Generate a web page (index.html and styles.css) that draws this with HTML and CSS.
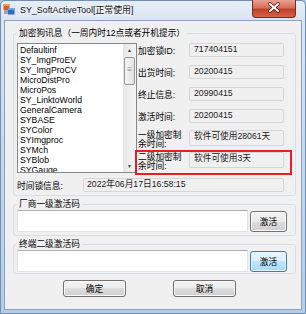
FILE: index.html
```html
<!DOCTYPE html>
<html lang="zh-CN">
<head>
    <meta charset="UTF-8">
    <title>SY_SoftActiveTool</title>
    <link rel="stylesheet" href="styles.css">
</head>
<body>
<div class="window">
    <div class="titlebar">
        <svg class="app-icon" width="12" height="12" viewBox="0 0 12 12">
            <rect x="0.5" y="1" width="6" height="6" fill="#e2572b"/>
            <rect x="0.5" y="1" width="6" height="2" fill="#f59a52"/>
            <rect x="5" y="5" width="6.5" height="6.5" fill="#2f6cc4"/>
            <rect x="5" y="5" width="6.5" height="2" fill="#6fa4e8"/>
            <rect x="1" y="7" width="4" height="4" fill="#9aa5b2"/>
        </svg>
        <span class="title">SY_SoftActiveTool[正常使用]</span>
        <span class="close-btn">
            <svg width="44" height="18" viewBox="0 0 44 18">
                <path d="M18 5 L26 12 M26 5 L18 12" stroke="#5b1712" stroke-width="3.6" stroke-linecap="round"/>
                <path d="M18 5 L26 12 M26 5 L18 12" stroke="#fff" stroke-width="2" stroke-linecap="round"/>
            </svg>
        </span>
    </div>
    <div class="client">
        <fieldset class="group info">
            <legend>加密狗讯息（一周内时12点或者开机提示）</legend>
            <div class="info-top">
                <div class="listbox">
                    <ul class="items">
                        <li>Defaultinf</li>
                        <li>SY_ImgProEV</li>
                        <li>SY_ImgProCV</li>
                        <li>MicroDistPro</li>
                        <li>MicroPos</li>
                        <li>SY_LinktoWorld</li>
                        <li>GeneralCamera</li>
                        <li>SYBASE</li>
                        <li>SYColor</li>
                        <li>SYImgproc</li>
                        <li>SYMch</li>
                        <li>SYBlob</li>
                        <li>SYGauge</li>
                    </ul>
                    <div class="scrollbar">
                        <span class="sb-arrow">&#9650;</span>
                        <span class="sb-thumb">&#8801;</span>
                        <span class="sb-track"></span>
                        <span class="sb-arrow">&#9660;</span>
                    </div>
                </div>
                <div class="fields">
                    <div class="field"><span class="field-label">加密锁ID:</span><span class="field-box">717404151</span></div>
                    <div class="field"><span class="field-label">出货时间:</span><span class="field-box">20200415</span></div>
                    <div class="field"><span class="field-label">终止信息:</span><span class="field-box">20990415</span></div>
                    <div class="field"><span class="field-label">激活时间:</span><span class="field-box">20200415</span></div>
                    <div class="field two-line"><span class="field-label">一级加密制<br>余时间:</span><span class="field-box tall">软件可使用28061天</span></div>
                    <div class="field two-line marked"><span class="field-label">二级加密制<br>余时间:</span><span class="field-box tall">软件可使用3天</span></div>
                </div>
            </div>
            <div class="timelock">
                <span class="timelock-label">时间锁信息:</span>
                <span class="field-box wide">2022年06月17日16:58:15</span>
            </div>
        </fieldset>

        <fieldset class="group code">
            <legend>厂商一级激活码</legend>
            <div class="code-input"></div>
            <button class="btn activate">激活</button>
        </fieldset>

        <fieldset class="group code last">
            <legend>终端二级激活码</legend>
            <div class="code-input"></div>
            <button class="btn activate focused">激活</button>
        </fieldset>

        <div class="actions">
            <button class="btn action">确定</button>
            <button class="btn action">取消</button>
        </div>
    </div>
</div>
</body>
</html>
```

FILE: styles.css
```css
* { box-sizing: border-box; }
html, body { margin: 0; padding: 0; }
body {
    width: 306px;
    height: 314px;
    overflow: hidden;
    font-family: "Liberation Sans", "Noto Sans CJK SC", sans-serif;
    font-size: 8.7px;
    color: #000;
    background: #a9c3df;
}

.window {
    width: 306px;
    height: 314px;
    display: flex;
    flex-direction: column;
    border: 1px solid #6f8fb3;
    border-radius: 5px 5px 0 0;
    background: linear-gradient(#e6edf5, #dae5f1 19px, #c2d6ec 60%, #b5cde8);
}

/* title bar */
.titlebar {
    height: 19px;
    display: flex;
    align-items: flex-start;
}
.app-icon { margin: 2px 0 0 2px; }
.title {
    margin-left: 5px;
    line-height: 18px;
    font-size: 8.9px;
    color: #111;
    text-shadow: 0 0 4px #fff, 0 0 6px #fff;
}
.close-btn {
    margin-left: auto;
    margin-right: 9px;
    margin-top: -1px;
    width: 44px;
    height: 18px;
    border: 1px solid #7a2a22;
    border-top: 0;
    border-radius: 0 0 4px 4px;
    background: linear-gradient(#e9a08f, #d4705a 45%, #c13f28 55%, #d2634a);
    overflow: hidden;
}
.close-btn svg { display: block; margin: -1px 0 0 -1px; }

/* client area */
.client {
    flex: 1;
    margin: 0 3px 3px 3px;
    padding: 7px 5px 0 8px;
    background: #f0f0f0;
    border: 1px solid #8aa2be;
}

.group {
    margin: 0;
    min-width: 0;
    border: 1px solid #d5dfe5;
    border-radius: 3px;
    padding: 5px 10px 3px 3px;
}
.group legend {
    padding: 0 2px;
    margin-left: 0;
    line-height: 10px;
}

.info-top {
    display: flex;
    align-items: flex-start;
}

/* list box */
.listbox {
    width: 120px;
    height: 130px;
    display: flex;
    background: #fff;
    border: 1px solid #828790;
}
.items {
    flex: 1;
    margin: 0;
    padding: 1px 0 0 2px;
    list-style: none;
    overflow: hidden;
}
.items li {
    line-height: 10px;
    white-space: nowrap;
}
.scrollbar {
    width: 13px;
    display: flex;
    flex-direction: column;
    background: linear-gradient(to right, #e6e6e6, #f5f5f5);
}
.sb-arrow {
    height: 12px;
    font-size: 5px;
    line-height: 12px;
    text-align: center;
    color: #3b3b3b;
}
.sb-thumb {
    height: 28px;
    margin: 1px 1px 0 1px;
    border: 1px solid #979797;
    border-radius: 2px;
    background: linear-gradient(to right, #f4f4f4, #e2e2e2);
    font-size: 8px;
    line-height: 24px;
    text-align: center;
    color: #8a8a8a;
}
.sb-track { flex: 1; }

/* info fields */
.fields { margin-left: 1px; }
.field {
    display: flex;
    align-items: center;
    margin-top: 8px;
}
.field:first-child { margin-top: 0; }
.field-label {
    width: 51px;
    white-space: nowrap;
}
.field-box {
    width: 95px;
    height: 14px;
    padding-left: 4px;
    line-height: 11px;
    border: 1px solid #d6d6d6;
    border-radius: 2px;
    background: #f0f0f0;
    color: #1a1a1a;
    white-space: nowrap;
}
.field-box.tall { height: 16px; }
.field.two-line {
    align-items: flex-start;
    height: 16px;
    margin-top: 7px;
}
.field.two-line .field-label {
    line-height: 8.5px;
    padding-top: 1px;
}
.field.marked {
    height: auto;
    margin: 4px -8px 0 -3px;
    padding: 0 6px 2px 1px;
    border: 2px solid #ec1c24;
}
.field.marked .field-label { line-height: 9px; padding-top: 1px; }

.timelock {
    display: flex;
    align-items: center;
    margin-top: 3px;
}
.timelock-label { width: 66px; }
.field-box.wide { width: 201px; padding-left: 3px; }

/* activation code groups */
.group.code {
    display: flex;
    align-items: center;
    margin-top: 3px;
    padding: 1px 8px 3px 3px;
}
.group.code.last { padding-bottom: 1px; }
.code-input {
    flex: 1;
    height: 22px;
    background: #fff;
    border: 1px solid #e2e3ea;
    border-top-color: #abadb3;
}

.btn {
    font: inherit;
    color: #000;
    padding: 0;
    border: 1px solid #707070;
    border-radius: 3px;
    background: linear-gradient(#f2f2f2, #ebebeb 50%, #dddddd 50%, #cfcfcf);
    box-shadow: inset 0 0 0 1px #fbfbfb;
}
.btn.activate {
    width: 37px;
    height: 21px;
    margin-left: 2px;
}
.btn.focused {
    border-color: #3c7fb1;
    background: linear-gradient(#eaf6fd, #d9f0fc 50%, #bee6fd 50%, #a7d9f5);
    box-shadow: inset 0 0 0 1px #e3f4fc;
}

.actions {
    display: flex;
    gap: 47px;
    margin-top: 6px;
    padding-left: 50px;
}
.btn.action {
    width: 63px;
    height: 17px;
}
```
